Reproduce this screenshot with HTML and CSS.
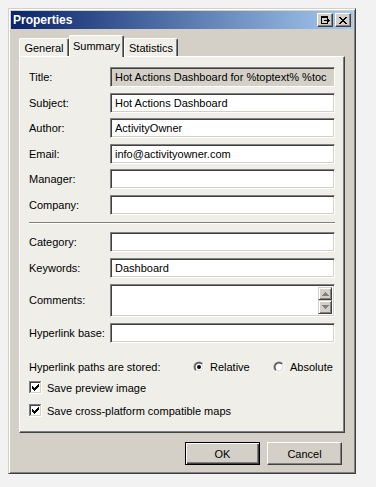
FILE: index.html
```html
<!DOCTYPE html>
<html>
<head>
<meta charset="utf-8">
<title>Properties</title>
<link rel="stylesheet" href="styles.css">
</head>
<body>
<div class="window">
  <div class="titlebar">
    <span class="title">Properties</span>
    <div class="caption-btns">
      <span class="cbtn">
        <svg width="9" height="8" viewBox="0 0 9 8" shape-rendering="crispEdges">
          <rect x="0" y="0" width="7" height="2" fill="#000"/>
          <rect x="0" y="2" width="1" height="6" fill="#000"/>
          <rect x="0" y="7" width="7" height="1" fill="#000"/>
          <rect x="6" y="2" width="1" height="1" fill="#000"/>
          <rect x="6" y="6" width="1" height="1" fill="#000"/>
          <rect x="3" y="4" width="4" height="1" fill="#000"/>
          <rect x="6" y="3" width="1" height="3" fill="#000"/>
          <rect x="7" y="3" width="1" height="3" fill="#000"/>
          <rect x="8" y="4" width="1" height="1" fill="#000"/>
        </svg>
      </span>
      <span class="cbtn">
        <svg width="8" height="7" viewBox="0 0 8 7" shape-rendering="crispEdges">
          <path d="M0 0h2v1h-2zM6 0h2v1h-2zM1 1h2v1h-2zM5 1h2v1h-2zM2 2h4v1h-4zM3 3h2v1h-2zM2 4h4v1h-4zM1 5h2v1h-2zM5 5h2v1h-2zM0 6h2v1h-2zM6 6h2v1h-2z" fill="#000"/>
        </svg>
      </span>
    </div>
  </div>
  <div class="client">
    <div class="tabs">
      <div class="tab tab-general">General</div>
      <div class="tab tab-summary active">Summary</div>
      <div class="tab tab-stats">Statistics</div>
    </div>
    <div class="panel">
      <div class="form form-top">
        <span class="lbl">Title:</span><div class="field readonly"><span class="val">Hot Actions Dashboard for %toptext% %toc</span></div>
        <span class="lbl">Subject:</span><div class="field"><span class="val">Hot Actions Dashboard</span></div>
        <span class="lbl">Author:</span><div class="field"><span class="val">ActivityOwner</span></div>
        <span class="lbl">Email:</span><div class="field"><span class="val">info@activityowner.com</span></div>
        <span class="lbl">Manager:</span><div class="field"></div>
        <span class="lbl">Company:</span><div class="field"></div>
      </div>
      <div class="sep"></div>
      <div class="form form-bottom">
        <span class="lbl">Category:</span><div class="field"></div>
        <span class="lbl">Keywords:</span><div class="field"><span class="val">Dashboard</span></div>
        <span class="lbl">Comments:</span>
        <div class="field multi">
          <div class="vscroll">
            <div class="sbtn">
              <svg width="7" height="4" viewBox="0 0 7 4" shape-rendering="crispEdges"><path d="M3 0h1v1h1v1h1v1h1v1h-7v-1h1v-1h1v-1h1z" fill="#808080"/></svg>
            </div>
            <div class="sbtn">
              <svg width="7" height="4" viewBox="0 0 7 4" shape-rendering="crispEdges"><path d="M0 0h7v1h-1v1h-1v1h-1v1h-1v-1h-1v-1h-1v-1h-1z" fill="#808080"/></svg>
            </div>
          </div>
        </div>
        <span class="lbl">Hyperlink base:</span><div class="field"></div>
      </div>
      <div class="paths">
        <span class="paths-label">Hyperlink paths are stored:</span>
        <span class="radio radio-rel">
          <svg width="12" height="12" viewBox="0 0 12 12">
            <defs>
              <linearGradient id="ro" x1="0" y1="0" x2="1" y2="1"><stop offset="0.45" stop-color="#808080"/><stop offset="0.55" stop-color="#ffffff"/></linearGradient>
              <linearGradient id="ri" x1="0" y1="0" x2="1" y2="1"><stop offset="0.45" stop-color="#404040"/><stop offset="0.55" stop-color="#d4d0c8"/></linearGradient>
            </defs>
            <circle cx="6" cy="6" r="5.5" fill="url(#ro)"/>
            <circle cx="6" cy="6" r="4.5" fill="url(#ri)"/>
            <circle cx="6" cy="6" r="3.5" fill="#fff"/>
            <circle cx="6" cy="6" r="2" fill="#000"/>
          </svg>
          <span>Relative</span>
        </span>
        <span class="radio">
          <svg width="12" height="12" viewBox="0 0 12 12">
            <circle cx="6" cy="6" r="5.5" fill="url(#ro)"/>
            <circle cx="6" cy="6" r="4.5" fill="url(#ri)"/>
            <circle cx="6" cy="6" r="3.5" fill="#fff"/>
          </svg>
          <span>Absolute</span>
        </span>
      </div>
      <div class="check check-1">
        <svg class="cb" width="13" height="13" viewBox="0 0 13 13" shape-rendering="crispEdges">
          <rect x="0" y="0" width="13" height="13" fill="#fff"/>
          <rect x="0" y="0" width="12" height="12" fill="#808080"/>
          <rect x="1" y="1" width="11" height="11" fill="#d4d0c8"/>
          <rect x="1" y="1" width="10" height="10" fill="#404040"/>
          <rect x="2" y="2" width="9" height="9" fill="#fff"/>
          <path d="M3 5h1v3h-1zM4 6h1v3h-1zM5 7h1v3h-1zM6 6h1v3h-1zM7 5h1v3h-1zM8 4h1v3h-1zM9 3h1v3h-1z" fill="#000"/>
        </svg>
        <span>Save preview image</span>
      </div>
      <div class="check check-2">
        <svg class="cb" width="13" height="13" viewBox="0 0 13 13" shape-rendering="crispEdges">
          <rect x="0" y="0" width="13" height="13" fill="#fff"/>
          <rect x="0" y="0" width="12" height="12" fill="#808080"/>
          <rect x="1" y="1" width="11" height="11" fill="#d4d0c8"/>
          <rect x="1" y="1" width="10" height="10" fill="#404040"/>
          <rect x="2" y="2" width="9" height="9" fill="#fff"/>
          <path d="M3 5h1v3h-1zM4 6h1v3h-1zM5 7h1v3h-1zM6 6h1v3h-1zM7 5h1v3h-1zM8 4h1v3h-1zM9 3h1v3h-1z" fill="#000"/>
        </svg>
        <span>Save cross-platform compatible maps</span>
      </div>
    </div>
    <div class="actions">
      <div class="btn default"><span>OK</span></div>
      <div class="btn"><span>Cancel</span></div>
    </div>
  </div>
</div>
</body>
</html>
```

FILE: styles.css
```css
* { box-sizing: border-box; }

body {
  margin: 0;
  background: #f2f2f2;
  font-family: "Liberation Sans", Arial, sans-serif;
  font-size: 11px;
  color: #000;
}

.window {
  margin: 8px 0 0 8px;
  width: 348px;
  height: 466px;
  background: #d4d0c8;
  border: 1px solid;
  border-color: #d4d0c8 #404040 #404040 #d4d0c8;
  box-shadow: inset 1px 1px #fff, inset -1px -1px #808080;
  padding: 2px;
  display: flex;
  flex-direction: column;
}

.titlebar {
  height: 18px;
  background: linear-gradient(to right, #0a246a, #a6caf0);
  display: flex;
  align-items: center;
  justify-content: space-between;
  padding: 0 2px 0 2px;
}

.title {
  color: #fff;
  font-weight: bold;
  font-size: 12px;
}

.caption-btns {
  display: flex;
  gap: 2px;
}

.cbtn {
  width: 16px;
  height: 14px;
  background: #d4d0c8;
  border: 1px solid;
  border-color: #fff #404040 #404040 #fff;
  box-shadow: inset -1px -1px #808080;
  display: flex;
  align-items: center;
  justify-content: center;
}

.client {
  flex: 1;
  display: flex;
  flex-direction: column;
  padding: 6px 8px 0;
}

.tabs {
  height: 21px;
  display: flex;
  align-items: flex-end;
}

.tab {
  height: 18px;
  background: #efeee9;
  border-top: 1px solid #fff;
  border-left: 1px solid #fff;
  border-right: 1px solid #404040;
  box-shadow: inset -1px 0 #808080;
  border-radius: 2px 2px 0 0;
  display: flex;
  align-items: center;
  justify-content: center;
  padding-top: 1px;
}

.tab-general { width: 50px; }
.tab-summary { width: 55px; }
.tab-stats { width: 54px; }

.tab.active {
  height: 22px;
  margin-bottom: -1px;
  position: relative;
  z-index: 1;
  padding-top: 0;
  padding-bottom: 2px;
}

.panel {
  flex: 1;
  background: #efeee9;
  border: 1px solid;
  border-color: #fff #404040 #404040 #fff;
  box-shadow: inset -1px -1px #808080;
  padding: 10px 9px 0 9px;
}

.form {
  display: grid;
  grid-template-columns: 81px 1fr;
  align-items: center;
}

.form-top {
  grid-auto-rows: 20px;
  row-gap: 5.6px;
}

.form-bottom {
  grid-template-rows: 20px 20px 33px 20px;
  row-gap: 6px;
  margin-top: 8px;
}

.lbl {
  white-space: nowrap;
}

.field {
  height: 100%;
  background: #fff;
  border: 1px solid;
  border-color: #808080 #fff #fff #808080;
  box-shadow: inset 1px 1px #404040, inset -1px -1px #d4d0c8;
  padding: 0 3px 0 4px;
  display: flex;
  align-items: center;
  overflow: hidden;
  white-space: nowrap;
}

.field.readonly {
  background: #d4d0c8;
}

.field.multi {
  justify-content: flex-end;
  align-items: stretch;
  padding: 2px 2px 2px 0;
}

.vscroll {
  width: 14px;
  display: flex;
  flex-direction: column;
}

.sbtn {
  flex: 1;
  background: #d4d0c8;
  border: 1px solid;
  border-color: #d4d0c8 #404040 #404040 #d4d0c8;
  box-shadow: inset 1px 1px #fff, inset -1px -1px #808080;
  display: flex;
  align-items: center;
  justify-content: center;
}

.sep {
  margin-top: 7px;
  height: 2px;
  border-top: 1px solid #808080;
  border-bottom: 1px solid #fff;
}

.paths {
  margin-top: 16px;
  height: 16px;
  display: flex;
  align-items: center;
}

.paths-label {
  width: 164px;
}

.radio {
  display: flex;
  align-items: center;
  gap: 5px;
}

.radio-rel {
  width: 80px;
}

.check {
  height: 16px;
  display: flex;
  align-items: center;
  gap: 5px;
}

.check-1 { margin-top: 5px; }
.check-2 { margin-top: 7px; }

.actions {
  margin: 9px 0 6px;
  padding-right: 3px;
  display: flex;
  justify-content: flex-end;
  gap: 7px;
}

.btn {
  width: 75px;
  height: 23px;
  background: #d4d0c8;
  border: 1px solid;
  border-color: #fff #404040 #404040 #fff;
  box-shadow: inset -1px -1px #808080;
  display: flex;
  align-items: center;
  justify-content: center;
}

.btn.default {
  border: 1px solid #000;
  box-shadow: inset 1px 1px #fff, inset -1px -1px #404040, inset -2px -2px #808080;
}
```
